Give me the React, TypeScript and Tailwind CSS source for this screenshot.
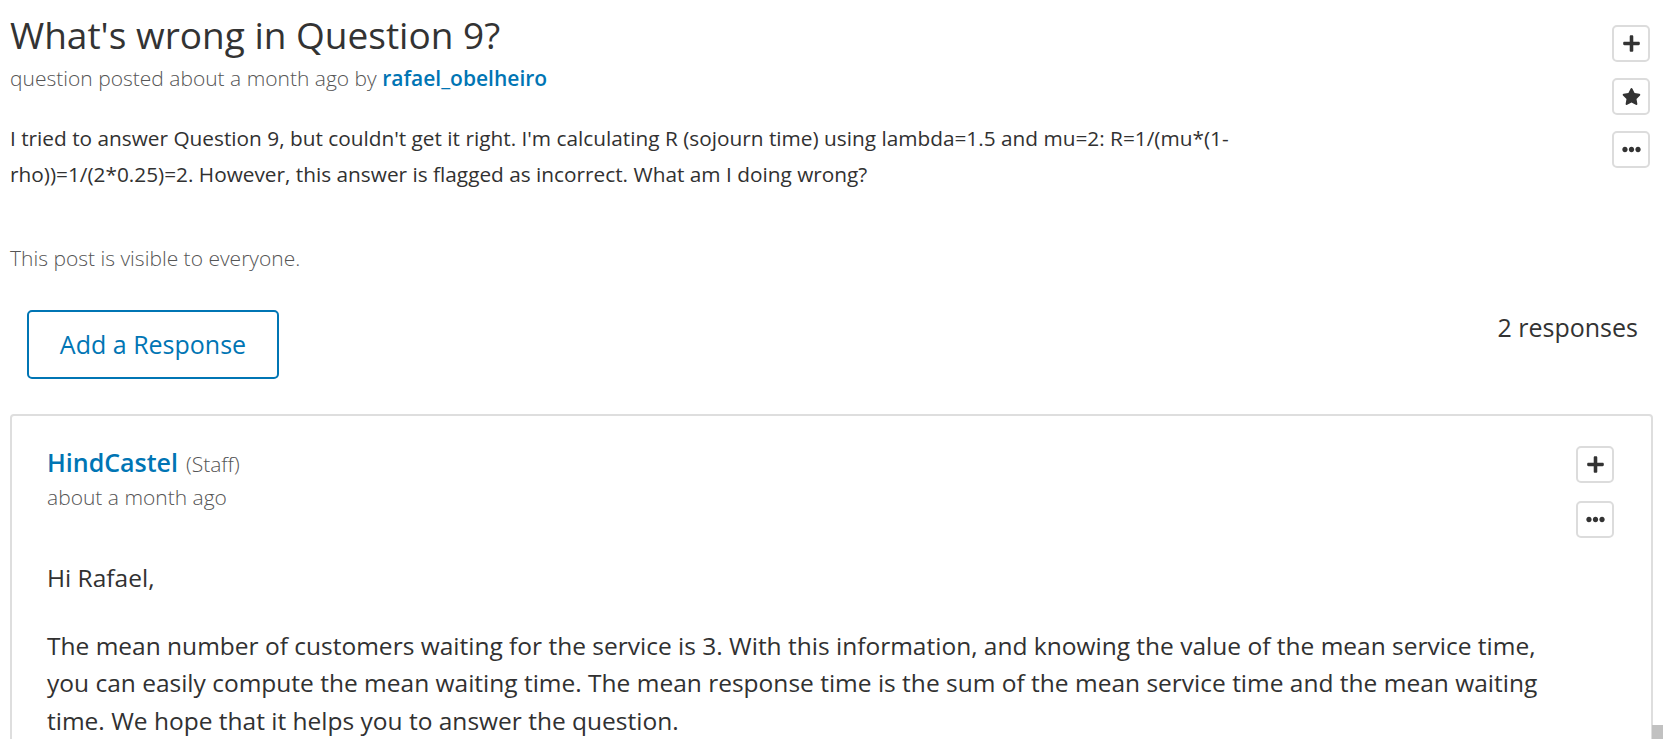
import { FaPlus, FaStar, FaEllipsisH } from 'react-icons/fa'

const font = { fontFamily: '"Open Sans", "Liberation Sans", sans-serif' }

function IconButton({ children }: { children: React.ReactNode }) {
  return (
    <button className="w-[38px] h-[37px] flex items-center justify-center rounded-[5px] border-2 border-[#dcdcdc] bg-white text-[#333] text-[19px]">
      {children}
    </button>
  )
}

export default function App() {
  return (
    <div className="min-h-screen bg-white text-[#313131] px-[10px] overflow-hidden" style={font}>
      {/* question */}
      <div className="flex justify-between">
        <div className="max-w-[1300px]">
          <h1 className="mt-[11px] text-[37px] leading-[48px] font-normal text-[#333]">What's wrong in Question 9?</h1>
          <p className="mt-[5px] text-[21px] leading-[28px] font-light text-[#555]">
            question posted about a month ago by{' '}
            <a className="font-semibold text-[#0075b4]">rafael_obelheiro</a>
          </p>
          <p className="mt-[28px] text-[20.8px] leading-[36px]">
            I tried to answer Question 9, but couldn't get it right. I'm calculating R (sojourn time) using lambda=1.5 and mu=2: R=1/(mu*(1-rho))=1/(2*0.25)=2. However, this answer is flagged as incorrect. What am I doing wrong?
          </p>
          <p className="mt-[54px] text-[21px] leading-[24px] font-light text-[#555]">This post is visible to everyone.</p>
        </div>
        <div className="pt-[25px] pr-[3px] flex flex-col gap-[16px]">
          <IconButton><FaPlus /></IconButton>
          <IconButton><FaStar /></IconButton>
          <IconButton><FaEllipsisH /></IconButton>
        </div>
      </div>

      {/* responses header */}
      <div className="mt-[40px] flex justify-between items-start">
        <button className="ml-[17px] w-[252px] h-[69px] rounded-[5px] border-2 border-[#0075b4] text-[#0075b4] text-[25px]">
          Add a Response
        </button>
        <span className="mt-[1px] mr-[15px] text-[25px] leading-[32px] text-[#333]">2 responses</span>
      </div>

      {/* response card */}
      <div className="mt-[35px] border-2 border-[#dedede] rounded-[4px] pl-[35px] pr-[37px] pt-[30px] pb-[30px] flex gap-[35px]">
        <div className="flex-1 pt-[2px]">
          <div className="flex items-baseline gap-[8px] leading-[28px]">
            <a className="text-[25px] font-semibold text-[#0075b4]">HindCastel</a>
            <span className="text-[21px] font-light text-[#555]">(Staff)</span>
          </div>
          <div className="mt-[5px] text-[21px] leading-[28px] font-light text-[#555]">about a month ago</div>
          <p className="mt-[48px] text-[24.5px] leading-[37.5px]">Hi Rafael,</p>
          <p className="mt-[30px] text-[24.5px] leading-[37.5px]">
            The mean number of customers waiting for the service is 3. With this information, and knowing the value of the mean service time, you can easily compute the mean waiting time. The mean response time is the sum of the mean service time and the mean waiting time. We hope that it helps you to answer the question.
          </p>
        </div>
        <div className="flex flex-col gap-[18px]">
          <IconButton><FaPlus /></IconButton>
          <IconButton><FaEllipsisH /></IconButton>
        </div>
      </div>

      {/* scrollbar thumb */}
      <div className="fixed right-0 bottom-0 w-[11px] h-[14px] bg-[#c1c1c1]" />
    </div>
  )
}
